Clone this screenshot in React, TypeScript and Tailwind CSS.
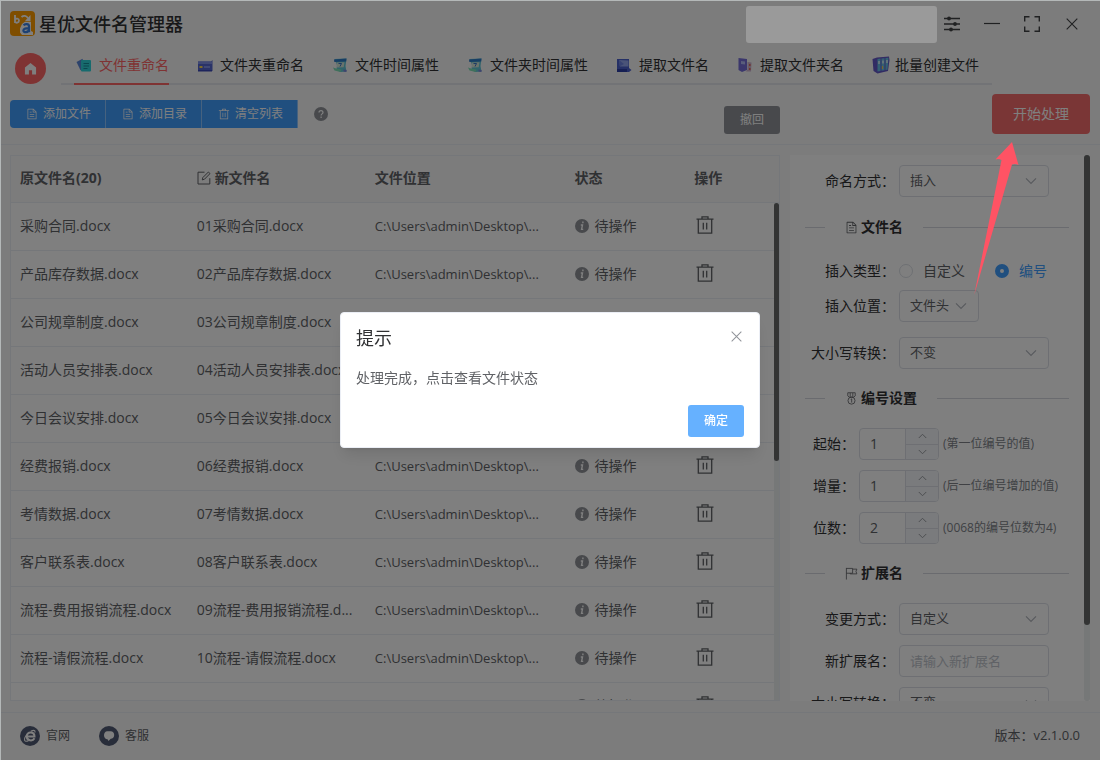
import React from "react";

type IconProps = { className?: string };

const DocIcon = ({ className }: IconProps) => (
  <svg viewBox="0 0 1024 1024" fill="currentColor" className={className} aria-hidden="true">
    <path d="M832 384H576V128H192v768h640V384zm-26.496-64L640 154.496V320h165.504zM160 64h480l256 256v608a32 32 0 0 1-32 32H160a32 32 0 0 1-32-32V96a32 32 0 0 1 32-32m160 448h384v64H320zm0-192h160v64H320zm0 384h384v64H320z" />
  </svg>
);

const TrashIcon = ({ className }: IconProps) => (
  <svg viewBox="0 0 1024 1024" fill="currentColor" className={className} aria-hidden="true">
    <path d="M160 256H96a32 32 0 0 1 0-64h256V95.936a32 32 0 0 1 32-32h256a32 32 0 0 1 32 32V192h256a32 32 0 1 1 0 64h-64v672a32 32 0 0 1-32 32H192a32 32 0 0 1-32-32zm448-64v-64H416v64zM224 896h576V256H224zm192-128a32 32 0 0 1-32-32V416a32 32 0 0 1 64 0v320a32 32 0 0 1-32 32m192 0a32 32 0 0 1-32-32V416a32 32 0 0 1 64 0v320a32 32 0 0 1-32 32" />
  </svg>
);

const RowTrashIcon = ({ className }: IconProps) => (
  <svg viewBox="0 0 18 18" fill="none" stroke="currentColor" strokeWidth="1.3" className={className} aria-hidden="true">
    <path d="M.5 3.2h17M6 3V.8h6V3M2.300 3.200v14h13.400v-14M7.300 6.800v6.600M10.700 6.800v6.600" />
  </svg>
);

const EditIcon = ({ className }: IconProps) => (
  <svg viewBox="0 0 14 14" fill="none" stroke="currentColor" strokeWidth="1" className={className} aria-hidden="true">
    <path d="M7.500 1.200H1v11.800h11.800V7.200" />
    <path d="M5.300 8.900l.5-2.300L11.400 1l1.600 1.600-5.500 5.600z" />
  </svg>
);

const Chevron = ({ className }: IconProps) => (
  <svg viewBox="0 0 12 8" fill="none" stroke="currentColor" strokeWidth="1.200" className={className} aria-hidden="true">
    <path d="M1 1.300l5 5 5-5" />
  </svg>
);

const MedalIcon = ({ className }: IconProps) => (
  <svg viewBox="0 0 14 14" fill="none" stroke="currentColor" strokeWidth=".9" className={className} aria-hidden="true">
    <path d="M3 .8h8v3.400L9.400 5.600H4.600L3 4.200zM5.600 1v4.200M8.400 1v4.200" />
    <circle cx="7" cy="9.300" r="3.800" />
    <path d="M6.200 8l1-.6v4" />
  </svg>
);

const FlagIcon = ({ className }: IconProps) => (
  <svg viewBox="0 0 14 14" fill="none" stroke="currentColor" strokeWidth=".9" className={className} aria-hidden="true">
    <path d="M1.500 1v12.500M1.500 1.500h6.700v5.200H1.500M8.200 2.300h4.600l-1 2.400 1 2.700H5.500v-.7" />
  </svg>
);

const CloseIcon = ({ className }: IconProps) => (
  <svg viewBox="0 0 12 12" fill="none" stroke="currentColor" strokeWidth="1.100" className={className} aria-hidden="true">
    <path d="M.7.7l10.600 10.600M11.300.7L.7 11.300" />
  </svg>
);

const Logo = () => (
  <svg viewBox="0 0 25 25" className="size-[25px] shrink-0" aria-hidden="true">
    <rect width="25" height="25" rx="4" fill="#ff9c00" />
    <g fill="none" stroke="#fff" strokeWidth="1.800">
      <path d="M5 4v8M5 8.600c1-1.600 4-1.400 4 1s-3 2.800-4 1" />
      <path d="M11.500 6c2-1.800 5-1.600 6.500 1.200" />
    </g>
    <path d="M20.500 4v6h-5.500z" fill="#fff" />
    <path d="M12 13l3-2.200h6V20l2 1v3h-11l-2-2.500v-4z" fill="#fff" />
    <path d="M13.600 14.300c1.200-1.700 5.400-1.600 5.400 1v6M19 17.200c-3-.2-5.600.4-5.600 2.300 0 2.500 4.400 2.200 5.600-.5" fill="none" stroke="#3b82e6" strokeWidth="2.300" />
  </svg>
);

const IconCards = () => (
  <svg viewBox="0 0 16 16" className="size-4" aria-hidden="true">
    <path d="M.5 5l6-3.300 3 9.500-5 2z" fill="#5b86d8" />
    <rect x="5" y="3" width="10" height="11.500" rx="1" fill="#2ed6dc" />
    <path d="M7.500 6.500h5.500M7.500 9h5.500M7.500 11.500h4" stroke="#168e9c" strokeWidth="1" />
  </svg>
);
const IconFolder = () => (
  <svg viewBox="0 0 16 16" className="size-4" aria-hidden="true">
    <path d="M1 4.500h13l1.500-1.500v11H1z" fill="#5566d0" />
    <path d="M1 4.500h14v2.500H1z" fill="#8090e8" />
    <path d="M2.500 10h3" stroke="#ffd84a" strokeWidth="2" />
    <path d="M7 10h6" stroke="#8fa2f5" strokeWidth="1.500" />
    <path d="M1 13h14v1.500H1z" fill="#3b49b8" />
  </svg>
);
const IconCalendar = () => (
  <svg viewBox="0 0 16 16" className="size-4" aria-hidden="true">
    <path d="M2.500 2l12-.5-1 7.500 1 5.500-6 .5-4-2 .5-5z" fill="#62c6d6" />
    <path d="M2 2.500l12.500-1-.3 3L2.300 5z" fill="#2f7cc8" />
    <path d="M4.500 5.500l8-.3-.8 5-6.700.3z" fill="#d4e6d8" />
    <path d="M6.500 6.500h3L8 9.500" fill="none" stroke="#3b79ca" strokeWidth="1" />
    <path d="M1 10.500c3 1.500 6 .8 8.500 2.200l-1 2.300-6-1.500z" fill="#7fe0b8" />
    <path d="M11.500 13.500l3 .5" stroke="#7d86dc" strokeWidth="1.800" />
  </svg>
);
const IconExtract = () => (
  <svg viewBox="0 0 16 16" className="size-4" aria-hidden="true">
    <path d="M1 2h12v9l2.500 2-2.500 2H1z" fill="#4a60cc" />
    <path d="M3 3l9.500.5v6L4 9.500z" fill="#94a8f0" />
    <path d="M3 3l5 4-4.500 2.500z" fill="#6f84e2" />
    <path d="M1 12h10v3H1z" fill="#2d3fa6" />
  </svg>
);
const IconNotebook = () => (
  <svg viewBox="0 0 16 16" className="size-4" aria-hidden="true">
    <path d="M1.500 1l8.500 1v11l-5 2-3.500-2z" fill="#766fd8" />
    <path d="M4 4l4 .5v3L4 7z" fill="#b4bcf6" />
    <path d="M10.500 5l4 .5-.5 9h-5l1.500-2z" fill="#d0b4d0" />
    <path d="M12.800 7v2M12.800 11v2" stroke="#e2685c" strokeWidth="1.500" />
  </svg>
);
const IconBinders = () => (
  <svg viewBox="0 0 18 18" className="size-[18px]" aria-hidden="true">
    <path d="M.5 3L5 1.500l12-1L17.500 4 16 15 5.500 17.500 1.500 15z" fill="#6458c8" />
    <path d="M5.500 3l3-.4V15l-3 .5zM9.500 2.500l3-.3v12l-3 .5zM13.500 2l3-.3-1 12-2 .3z" fill="#66c0e6" />
    <path d="M7 5v3M11 4.500v3M15 4v3" stroke="#fff" strokeWidth="1.200" />
    <path d="M10.500 10v3" stroke="#f0c95a" strokeWidth="1.200" />
  </svg>
);

const tabs = [
  { label: "文件重命名", icon: <IconCards /> },
  { label: "文件夹重命名", icon: <IconFolder /> },
  { label: "文件时间属性", icon: <IconCalendar /> },
  { label: "文件夹时间属性", icon: <IconCalendar /> },
  { label: "提取文件名", icon: <IconExtract /> },
  { label: "提取文件夹名", icon: <IconNotebook /> },
  { label: "批量创建文件", icon: <IconBinders /> },
];

const files = [
  ["采购合同.docx", "01采购合同.docx"],
  ["产品库存数据.docx", "02产品库存数据.docx"],
  ["公司规章制度.docx", "03公司规章制度.docx"],
  ["活动人员安排表.docx", "04活动人员安排表.docx"],
  ["今日会议安排.docx", "05今日会议安排.docx"],
  ["经费报销.docx", "06经费报销.docx"],
  ["考情数据.docx", "07考情数据.docx"],
  ["客户联系表.docx", "08客户联系表.docx"],
  ["流程-费用报销流程.docx", "09流程-费用报销流程.d..."],
  ["流程-请假流程.docx", "10流程-请假流程.docx"],
  ["", ""],
];

const TitleBar = () => (
  <div className="flex h-[47px] shrink-0 items-center justify-between pl-[10px] pr-5">
    <div className="flex items-center gap-1">
      <Logo />
      <h1 className="text-lg font-medium leading-6 text-[#303133]">星优文件名管理器</h1>
    </div>
    <div className="flex items-center gap-6 text-[#404244]">
      <button type="button" aria-label="设置">
        <svg viewBox="0 0 16 16" className="size-4" fill="none" stroke="currentColor" strokeWidth="1.300" aria-hidden="true">
          <path d="M0 2.500h16M0 8h16M0 13.500h16" />
          <g fill="currentColor" stroke="none">
            <circle cx="5" cy="2.500" r="1.900" />
            <circle cx="11" cy="8" r="1.900" />
            <circle cx="7" cy="13.500" r="1.900" />
          </g>
        </svg>
      </button>
      <button type="button" aria-label="最小化">
        <svg viewBox="0 0 16 16" className="size-4" stroke="currentColor" strokeWidth="1.200" aria-hidden="true">
          <path d="M0 7.500h16" />
        </svg>
      </button>
      <button type="button" aria-label="最大化">
        <svg viewBox="0 0 16 16" className="size-4" fill="none" stroke="currentColor" strokeWidth="1.400" aria-hidden="true">
          <path d="M.7 5.500V.7h4.800M10.500.7h4.800v4.800M15.300 10.500v4.800h-4.800M5.500 15.300H.7v-4.800" />
        </svg>
      </button>
      <button type="button" aria-label="关闭" className="flex w-4 justify-center">
        <CloseIcon className="size-3" />
      </button>
    </div>
  </div>
);

const TabBar = () => (
  <div className="flex h-[38px] shrink-0 items-end pl-[15px]">
    <button type="button" aria-label="首页" className="mb-px flex size-[31px] items-center justify-center rounded-full bg-[#ff6666]">
      <svg viewBox="0 0 14 14" className="size-[13px]" aria-hidden="true">
        <path d="M7 1l6 5v7.500H8.700V9H5.300v4.500H1V6z" fill="#fff" />
      </svg>
    </button>
    <nav className="ml-[15px] flex gap-[26px] border-b-2 border-[#e4e7ed] px-[13px]">
      {tabs.map((t, i) => (
        <a
          key={t.label}
          href="#"
          className={
            "-mb-0.5 flex h-[38px] items-center whitespace-nowrap border-b-2 text-sm " +
            (i === 0 ? "border-[#ff6666] text-[#ff6666]" : "border-transparent text-[#303133]")
          }
        >
          <span className="flex w-[25px] items-center pl-0.5">{t.icon}</span>
          {t.label}
        </a>
      ))}
    </nav>
  </div>
);

const toolButton =
  "flex h-7 items-center gap-[5px] border-r border-[#8cc5ff] bg-[#409eff] pl-4 pr-[14px] text-xs text-white";

const Toolbar = () => (
  <div className="flex h-[60px] shrink-0 items-center border-b border-[#ebeef5] px-[10px] pb-[2px]">
    <div className="flex flex-1 items-center">
      <div className="flex overflow-hidden rounded-l">
        <button type="button" className={toolButton}>
          <DocIcon className="size-3" />
          添加文件
        </button>
        <button type="button" className={toolButton}>
          <DocIcon className="size-3" />
          添加目录
        </button>
        <button type="button" className={toolButton}>
          <TrashIcon className="size-3" />
          清空列表
        </button>
      </div>
      <svg viewBox="0 0 14 14" className="ml-4 size-[14px]" aria-hidden="true">
        <circle cx="7" cy="7" r="7" fill="#909399" />
        <path d="M5 5.600c0-2.700 4-2.700 4 0 0 1.300-1.900 1.300-1.900 2.800M7.100 9.600v1.300" fill="none" stroke="#fff" strokeWidth="1.200" />
      </svg>
      <button type="button" className="mt-3 ml-auto h-7 rounded-[3px] bg-[#909399] px-4 text-xs text-white">
        撤回
      </button>
    </div>
    <div className="flex w-[310px] justify-end">
      <button type="button" className="h-10 w-[98px] rounded bg-[#f56c6c] text-sm text-white">
        开始处理
      </button>
    </div>
  </div>
);

const Cols = () => (
  <colgroup>
    <col className="w-[23%]" />
    <col className="w-[23.2%]" />
    <col className="w-[26%]" />
    <col className="w-[15.6%]" />
    <col className="w-[12.2%]" />
  </colgroup>
);

const headCell = "border-b border-[#ebeef5] pb-[2px] pl-[9px] font-bold";
const bodyCell = "truncate border-b border-[#ebeef5] pb-[2px] pl-[9px]";

const FileTable = () => (
  <section className="relative min-w-0 flex-1 overflow-hidden border border-[#ebeef5] bg-white">
    <div className="h-full overflow-y-auto [scrollbar-width:none]">
      <table className="w-full table-fixed border-separate border-spacing-0 text-left text-sm text-[#606266]">
        <Cols />
        <thead className="sticky top-0 z-10 bg-[#f8f8f9]">
          <tr className="h-[47px]">
            <th className={headCell}>原文件名(20)</th>
            <th className={headCell}>
              <span className="flex items-center gap-1">
                <EditIcon className="size-[14px]" />
                新文件名
              </span>
            </th>
            <th className={headCell}>文件位置</th>
            <th className={headCell}>状态</th>
            <th className={headCell}>操作</th>
          </tr>
        </thead>
        <tbody>
          {files.map(([name, next], i) => (
            <tr key={i} className="h-12">
              <td className={bodyCell}>{name}</td>
              <td className={bodyCell}>{next}</td>
              <td className={bodyCell}>
                <span className="text-[13px]">C:\Users\admin\Desktop\...</span>
              </td>
              <td className="border-b border-[#ebeef5] pb-[2px] pl-[10px]">
                <span className="flex items-center gap-[5px]">
                  <svg viewBox="0 0 14 14" className="size-[14px]" aria-hidden="true">
                    <circle cx="7" cy="7" r="7" fill="#909399" />
                    <path d="M7.900 2.600v1.600M5.800 6h1.700l-.9 4.400h1.600" fill="none" stroke="#fff" strokeWidth="1.400" />
                  </svg>
                  待操作
                </span>
              </td>
              <td className="border-b border-[#ebeef5] pl-[11px]">
                <button type="button" aria-label="删除" className="mb-1 block">
                  <RowTrashIcon className="size-[18px]" />
                </button>
              </td>
            </tr>
          ))}
        </tbody>
      </table>
    </div>
    <div className="absolute top-[47px] right-0 bottom-0 z-20 w-[5px] bg-[#ecf0f0]">
      <div className="h-[52%] rounded-full bg-[#666869]" />
    </div>
  </section>
);

const SectionTitle = ({ icon, children }: { icon: React.ReactNode; children: React.ReactNode }) => (
  <div className="mx-[15px] flex h-6 items-center text-sm font-bold text-[#303133]">
    <span className="h-px w-5 bg-[#d4d7de]" />
    <span className="flex items-center gap-[3px] px-5">
      {icon}
      {children}
    </span>
    <span className="h-px flex-1 bg-[#d4d7de]" />
  </div>
);

const fieldLabel = "w-[105px] shrink-0 whitespace-nowrap text-right text-sm text-[#303133]";

const SelectRow = ({ id, label, value, small }: { id: string; label: string; value: string; small?: boolean }) => (
  <div className="flex h-8 items-center gap-1">
    <label htmlFor={id} className={fieldLabel}>
      {label}
    </label>
    <div className={small ? "relative w-20" : "relative w-[150px]"}>
      <select
        id={id}
        className="block h-8 w-full appearance-none rounded border border-[#dcdfe6] bg-white pl-[10px] text-[13px] text-[#606266]"
      >
        <option>{value}</option>
      </select>
      <Chevron className="pointer-events-none absolute top-3 right-3 h-2 w-3 text-[#b2b5bc]" />
    </div>
  </div>
);

const NumberRow = ({ id, label, value, hint }: { id: string; label: string; value: string; hint: string }) => (
  <div className="flex h-8 items-center gap-1">
    <label htmlFor={id} className="w-[65px] shrink-0 text-right text-sm text-[#303133]">
      {label}
    </label>
    <div className="flex h-8 w-20 overflow-hidden rounded border border-[#dcdfe6] bg-white">
      <input id={id} type="text" inputMode="numeric" defaultValue={value} className="w-[45px] min-w-0 pl-[10px] text-sm text-[#606266]" />
      <div className="flex flex-1 flex-col border-l border-[#dcdfe6] bg-[#f5f7fa] text-[#909399]">
        <button type="button" aria-label={label + "增加"} className="flex flex-1 items-center justify-center border-b border-[#dcdfe6]">
          <Chevron className="h-[6px] w-[9px] rotate-180" />
        </button>
        <button type="button" aria-label={label + "减少"} className="flex flex-1 items-center justify-center">
          <Chevron className="h-[6px] w-[9px]" />
        </button>
      </div>
    </div>
    <span className="whitespace-nowrap text-xs text-[#808389]">{hint}</span>
  </div>
);

const radioCls =
  "size-[14px] appearance-none rounded-full border border-[#dcdfe6] bg-white checked:border-[5px] checked:border-[#409eff]";

const Settings = () => (
  <aside className="flex w-[300px] shrink-0 bg-white">
    <form className="min-w-0 flex-1 overflow-y-auto pt-[10px] [scrollbar-width:none]">
      <SelectRow id="mode" label="命名方式：" value="插入" />
      <div className="mt-[18px]">
        <SectionTitle icon={<DocIcon className="size-[13px] text-[#606266]" />}>文件名</SectionTitle>
      </div>
      <div role="radiogroup" aria-label="插入类型" className="mt-4 flex h-8 items-center gap-1">
        <span className={fieldLabel}>插入类型：</span>
        <label className="flex items-center gap-[10px] text-sm text-[#606266]">
          <input type="radio" name="kind" className={radioCls} />
          自定义
        </label>
        <label className="ml-[26px] flex items-center gap-[10px] text-sm text-[#409eff]">
          <input type="radio" name="kind" defaultChecked className={radioCls} />
          编号
        </label>
      </div>
      <div className="mt-[3px] space-y-[15px]">
        <SelectRow id="place" label="插入位置：" value="文件头" small />
        <SelectRow id="case" label="大小写转换：" value="不变" />
      </div>
      <div className="mt-[17px]">
        <SectionTitle icon={<MedalIcon className="size-[13px] text-[#606266]" />}>编号设置</SectionTitle>
      </div>
      <div className="mt-[18px] space-y-[10px]">
        <NumberRow id="start" label="起始：" value="1" hint="(第一位编号的值)" />
        <NumberRow id="step" label="增量：" value="1" hint="(后一位编号增加的值)" />
        <NumberRow id="digits" label="位数：" value="2" hint="(0068的编号位数为4)" />
      </div>
      <div className="mt-[17px]">
        <SectionTitle icon={<FlagIcon className="size-[13px] text-[#606266]" />}>扩展名</SectionTitle>
      </div>
      <div className="mt-[18px] space-y-[10px]">
        <SelectRow id="extmode" label="变更方式：" value="自定义" />
        <div className="flex h-8 items-center gap-1">
          <label htmlFor="ext" className={fieldLabel}>
            新扩展名：
          </label>
          <input
            id="ext"
            type="text"
            placeholder="请输入新扩展名"
            className="h-8 w-[150px] rounded border border-[#dcdfe6] bg-white px-[10px] text-[13px] text-[#606266] placeholder:text-[#c0c4cc]"
          />
        </div>
        <SelectRow id="extcase" label="大小写转换：" value="不变" />
      </div>
    </form>
    <div className="w-[6px] rounded-full bg-[#ecf0f0]">
      <div className="h-[86%] rounded-full bg-[#666869]" />
    </div>
  </aside>
);

const Footer = () => (
  <footer className="flex h-12 shrink-0 items-center border-t border-[#ebeef5] px-5 pb-[2px] text-[#606266]">
    <a href="#" className="flex items-center gap-[6px] text-xs">
      <svg viewBox="0 0 20 20" className="size-5" aria-hidden="true">
        <circle cx="10" cy="10" r="10" fill="#515a74" />
        <path d="M14.500 12.300c-1.800 3.200-7.800 2.800-7.800-2 0-5 7.800-5 7.800.2H7.500" fill="none" stroke="#fff" strokeWidth="2" />
        <path d="M14.800 6.500c.8-2.300-1-2.700-4-1.200M6 9.500C3.600 13 3.700 16.600 8.500 14.700" fill="none" stroke="#fff" strokeWidth="1.100" />
      </svg>
      官网
    </a>
    <a href="#" className="ml-[29px] flex items-center gap-[6px] text-xs">
      <svg viewBox="0 0 20 20" className="size-5" aria-hidden="true">
        <circle cx="10" cy="10" r="10" fill="#515a74" />
        <path d="M8.300 5.200h3.400c2 0 3.500 1.700 3.500 3.800s-1.500 3.700-3.500 3.800L9.500 15l-1-1.700C6.300 13 5 11.300 5 9.200s1.300-4 3.300-4z" fill="#fff" />
      </svg>
      客服
    </a>
    <p className="ml-auto text-[13px]">版本：v2.1.0.0</p>
  </footer>
);

const Dialog = () => (
  <div className="fixed inset-0 z-30 flex items-center justify-center bg-black/50">
    <div
      role="dialog"
      aria-modal="true"
      aria-labelledby="dialog-title"
      className="w-[420px] rounded border border-[#ebeef5] bg-white px-[15px] pt-[13px] pb-[10px] shadow-lg"
    >
      <div className="flex items-start justify-between">
        <h2 id="dialog-title" className="text-lg leading-6 text-[#303133]">
          提示
        </h2>
        <button type="button" aria-label="关闭" className="mt-0.5 flex size-4 items-center justify-center text-[#909399]">
          <CloseIcon className="size-[11px]" />
        </button>
      </div>
      <p className="pt-4 pb-[15px] text-sm leading-6 text-[#606266]">处理完成，点击查看文件状态</p>
      <div className="flex justify-end">
        <button type="button" className="h-8 w-14 rounded-[3px] bg-[#66b1ff] text-xs font-medium text-white">
          确定
        </button>
      </div>
    </div>
  </div>
);

export default function App() {
  return (
    <div className="relative flex h-screen flex-col overflow-hidden bg-[#f9f9f9] font-['Open_Sans','Noto_Sans_CJK_SC',sans-serif]">
      <TitleBar />
      <TabBar />
      <Toolbar />
      <main className="flex min-h-0 flex-1 gap-[10px] px-[10px] pt-[10px] pb-[11px]">
        <FileTable />
        <Settings />
      </main>
      <Footer />
      <Dialog />
      <div className="absolute top-[6px] right-[163px] z-40 h-[37px] w-[191px] rounded-[3px] bg-[#9a9a9a]" />
      <svg viewBox="0 0 46 154" className="pointer-events-none absolute top-[141px] right-[80px] z-40 h-[154px] w-[46px]" aria-hidden="true">
        <path d="M38 1L21.500 18.500q3-1 6 .5L.2 154 38 23.500q3.500-1 6.500.5z" fill="#ff5364" />
      </svg>
      <div className="pointer-events-none absolute inset-0 z-50 border-t border-l border-[#b4b8b8]" />
    </div>
  );
}
